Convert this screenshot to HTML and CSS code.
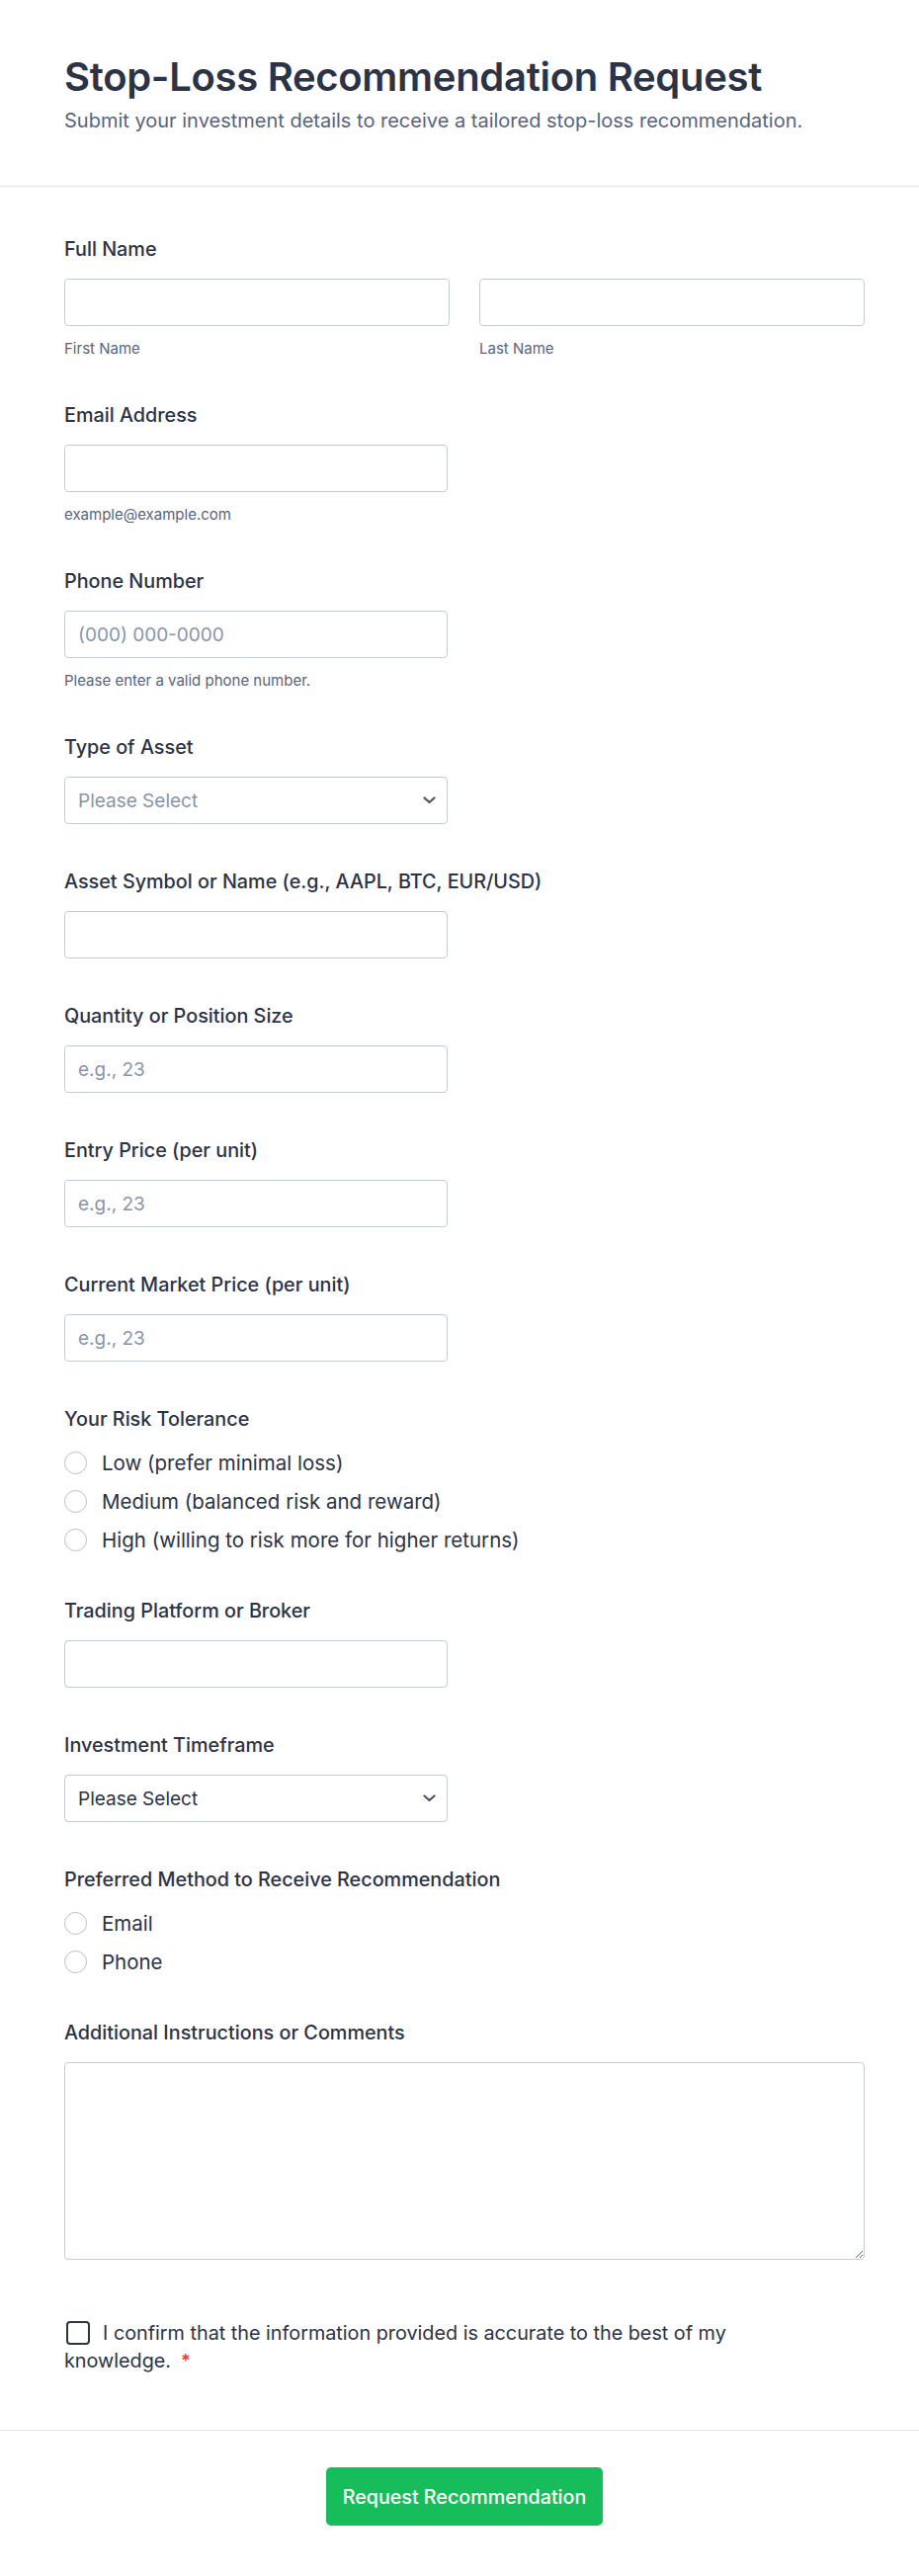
FILE: index.html
```html
<!DOCTYPE html>
<html lang="en">
<head>
<meta charset="utf-8">
<title>Stop-Loss Recommendation Request</title>
<link rel="stylesheet" href="styles.css">
</head>
<body>
<header class="header">
  <h1 class="title">Stop-Loss Recommendation Request</h1>
  <p class="subtitle">Submit your investment details to receive a tailored stop-loss recommendation.</p>
</header>
<form class="form">
  <div class="field">
    <label class="label">Full Name</label>
    <div class="name-grid">
      <div>
        <input class="input" type="text">
        <div class="sublabel">First Name</div>
      </div>
      <div>
        <input class="input" type="text">
        <div class="sublabel">Last Name</div>
      </div>
    </div>
  </div>

  <div class="field">
    <label class="label">Email Address</label>
    <input class="input half" type="email">
    <div class="sublabel">example@example.com</div>
  </div>

  <div class="field">
    <label class="label">Phone Number</label>
    <input class="input half" type="tel" placeholder="(000) 000-0000">
    <div class="sublabel">Please enter a valid phone number.</div>
  </div>

  <div class="field">
    <label class="label">Type of Asset</label>
    <div class="select-wrap half">
      <select class="input select muted"><option>Please Select</option></select>
      <svg class="chevron" width="13" height="8" viewBox="0 0 13 8"><path d="M1.5 1.5 L6.5 6 L11.5 1.5" fill="none" stroke="#4a5568" stroke-width="2.2" stroke-linecap="round" stroke-linejoin="round"/></svg>
    </div>
  </div>

  <div class="field">
    <label class="label">Asset Symbol or Name (e.g., AAPL, BTC, EUR/USD)</label>
    <input class="input half" type="text">
  </div>

  <div class="field">
    <label class="label">Quantity or Position Size</label>
    <input class="input half" type="text" placeholder="e.g., 23">
  </div>

  <div class="field">
    <label class="label">Entry Price (per unit)</label>
    <input class="input half" type="text" placeholder="e.g., 23">
  </div>

  <div class="field">
    <label class="label">Current Market Price (per unit)</label>
    <input class="input half" type="text" placeholder="e.g., 23">
  </div>

  <div class="field">
    <label class="label">Your Risk Tolerance</label>
    <div class="options">
      <label class="option"><input class="radio" type="radio" name="risk"><span>Low (prefer minimal loss)</span></label>
      <label class="option"><input class="radio" type="radio" name="risk"><span>Medium (balanced risk and reward)</span></label>
      <label class="option"><input class="radio" type="radio" name="risk"><span>High (willing to risk more for higher returns)</span></label>
    </div>
  </div>

  <div class="field">
    <label class="label">Trading Platform or Broker</label>
    <input class="input half" type="text">
  </div>

  <div class="field">
    <label class="label">Investment Timeframe</label>
    <div class="select-wrap half">
      <select class="input select"><option>Please Select</option></select>
      <svg class="chevron" width="13" height="8" viewBox="0 0 13 8"><path d="M1.5 1.5 L6.5 6 L11.5 1.5" fill="none" stroke="#4a5568" stroke-width="2.2" stroke-linecap="round" stroke-linejoin="round"/></svg>
    </div>
  </div>

  <div class="field">
    <label class="label">Preferred Method to Receive Recommendation</label>
    <div class="options">
      <label class="option"><input class="radio" type="radio" name="method"><span>Email</span></label>
      <label class="option"><input class="radio" type="radio" name="method"><span>Phone</span></label>
    </div>
  </div>

  <div class="field">
    <label class="label">Additional Instructions or Comments</label>
    <textarea class="input textarea"></textarea>
  </div>

  <div class="field check-field">
    <label class="check-label"><input class="checkbox" type="checkbox">I confirm that the information provided is accurate to the best of my knowledge.<span class="req">*</span></label>
  </div>
</form>
<footer class="footer">
  <button class="submit" type="button">Request Recommendation</button>
</footer>
</body>
</html>
```

FILE: styles.css
```css
* {
  box-sizing: border-box;
}

html, body {
  margin: 0;
  padding: 0;
  background: #ffffff;
}

body {
  font-family: Inter, "Noto Sans", "Liberation Sans", sans-serif;
  color: #2c3345;
}

.header {
  padding: 54px 65px 52px;
  border-bottom: 1px solid #e3e5ef;
}

.title {
  margin: 0;
  font-size: 40px;
  line-height: 48px;
  font-weight: 600;
  letter-spacing: -0.3px;
  color: #2c3345;
}

.subtitle {
  margin: 6px 0 0;
  font-size: 20px;
  line-height: 28px;
  color: #57647e;
}

.form {
  padding: 51px 55px 56px 65px;
}

.field {
  margin-bottom: 46px;
}

.field:last-child {
  margin-bottom: 0;
}

.label {
  display: block;
  font-size: 19.8px;
  line-height: 24px;
  font-weight: 500;
  color: #2c3345;
  margin-bottom: 18px;
}

.name-grid {
  display: grid;
  grid-template-columns: 1fr 1fr;
  column-gap: 30px;
}

.input {
  display: block;
  width: 100%;
  height: 48px;
  padding: 0 13px;
  border: 1px solid #c3cad8;
  border-radius: 4px;
  background: #ffffff;
  font-family: inherit;
  font-size: 19px;
  color: #2c3345;
  outline: none;
}

.input::placeholder {
  color: #8894ab;
}

.half {
  width: 388px;
}

.sublabel {
  margin-top: 14px;
  font-size: 15px;
  line-height: 18px;
  color: #57647e;
}

.select-wrap {
  position: relative;
}

.select {
  appearance: none;
  -webkit-appearance: none;
  padding-right: 36px;
}

.select.muted {
  color: #8894ab;
}

.chevron {
  position: absolute;
  right: 12px;
  top: 20px;
  pointer-events: none;
}

.options {
  display: flex;
  flex-direction: column;
  gap: 11px;
}

.option {
  display: flex;
  align-items: center;
  height: 28px;
  font-size: 20.5px;
  color: #2c3345;
}

.radio {
  appearance: none;
  -webkit-appearance: none;
  width: 23px;
  height: 23px;
  margin: 0 15px 0 0;
  border: 1px solid #b8bfcc;
  border-radius: 50%;
  background: #ffffff;
  flex: none;
}

.textarea {
  height: 200px;
  padding: 10px 13px;
  resize: vertical;
}

.check-field {
  padding-top: 14px;
}

.check-label {
  display: block;
  max-width: 710px;
  font-size: 19.8px;
  line-height: 28px;
  color: #2c3345;
}

.checkbox {
  appearance: none;
  -webkit-appearance: none;
  display: inline-block;
  width: 24px;
  height: 24px;
  margin: -6px 13px -6px 2px;
  border: 2px solid #2c3345;
  border-radius: 4px;
  vertical-align: 1px;
  background: #ffffff;
}

.req {
  color: #f23a3c;
  margin-left: 10px;
  font-size: 18px;
  font-weight: 600;
  line-height: 1;
}

.footer {
  border-top: 1px solid #e3e5ef;
  padding: 37px 55px 50px 65px;
  display: flex;
  justify-content: center;
}

.submit {
  height: 59px;
  width: 280px;
  padding: 0 16px;
  border: none;
  border-radius: 5px;
  background: #18bd5b;
  color: #ffffff;
  font-family: inherit;
  font-size: 19.7px;
  font-weight: 500;
  cursor: pointer;
}
```
